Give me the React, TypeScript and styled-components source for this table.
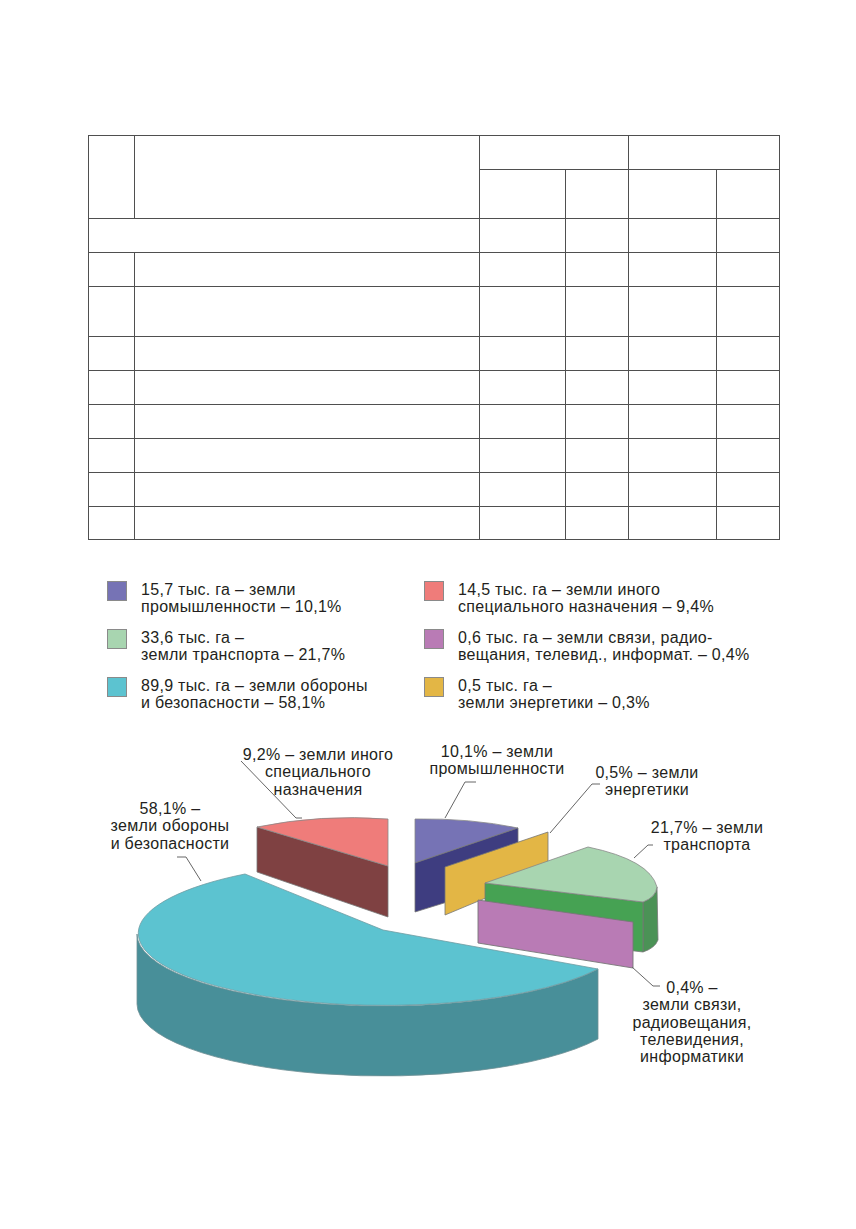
import styled, { createGlobalStyle } from "styled-components";

const GlobalStyle = createGlobalStyle`
  html, body {
    margin: 0;
    padding: 0;
    background: #ffffff;
  }
  body {
    font-family: "Liberation Sans", Arial, sans-serif;
    color: #231f20;
  }
`;

const rowHeights = [34, 34, 50, 34, 34, 34, 34, 34, 33];

const legendItems = [
  { color: "#7673b5", lines: ["15,7 тыс. га – земли", "промышленности – 10,1%"] },
  { color: "#ef7c7a", lines: ["14,5 тыс. га – земли иного", "специального назначения – 9,4%"] },
  { color: "#a8d5b0", lines: ["33,6 тыс. га –", "земли транспорта – 21,7%"] },
  {
    color: "#b97bb5",
    lines: ["0,6 тыс. га – земли связи, радио-", "вещания, телевид., информат. – 0,4%"],
  },
  { color: "#5cc3d0", lines: ["89,9 тыс. га – земли обороны", "и безопасности – 58,1%"] },
  { color: "#e3b645", lines: ["0,5 тыс. га –", "земли энергетики – 0,3%"] },
];

const labels = [
  { x: 318, y: 760, lines: ["9,2% – земли иного", "специального", "назначения"] },
  { x: 170, y: 814, lines: ["58,1% –", "земли обороны", "и безопасности"] },
  { x: 497, y: 757, lines: ["10,1% – земли", "промышленности"] },
  { x: 647, y: 778, lines: ["0,5% – земли", "энергетики"] },
  { x: 707, y: 833, lines: ["21,7% – земли", "транспорта"] },
  {
    x: 692,
    y: 993,
    lines: ["0,4% –", "земли связи,", "радиовещания,", "телевидения,", "информатики"],
  },
];

const leaders = [
  "M241,761 L296,818 L302,818",
  "M177,857 L186,857 L201,881",
  "M476,782 L465,782 L445,818",
  "M600,784 L592,784 L550,833",
  "M653,845 L648,845 L634,858",
  "M632,967 L653,986 L660,986",
];

export default function App() {
  return (
    <Page>
      <GlobalStyle />
      <DataTable>
        <colgroup>
          <col style={{ width: 46 }} />
          <col style={{ width: 345 }} />
          <col style={{ width: 86 }} />
          <col style={{ width: 63 }} />
          <col style={{ width: 88 }} />
          <col style={{ width: 63 }} />
        </colgroup>
        <tbody>
          <Row $h={34}>
            <Cell rowSpan={2} />
            <Cell rowSpan={2} />
            <Cell colSpan={2} />
            <Cell colSpan={2} />
          </Row>
          <Row $h={49}>
            <Cell />
            <Cell />
            <Cell />
            <Cell />
          </Row>
          {rowHeights.map((h, i) => (
            <Row key={i} $h={h}>
              {i === 0 ? (
                <Cell colSpan={2} />
              ) : (
                <>
                  <Cell />
                  <Cell />
                </>
              )}
              <Cell />
              <Cell />
              <Cell />
              <Cell />
            </Row>
          ))}
        </tbody>
      </DataTable>

      <Legend>
        {legendItems.map((item) => (
          <LegendItem key={item.lines[0]}>
            <Swatch $color={item.color} />
            <LegendText>
              {item.lines.map((l) => (
                <span key={l}>{l}</span>
              ))}
            </LegendText>
          </LegendItem>
        ))}
      </Legend>

      <Chart viewBox="0 711 856 400" width={856} height={400}>
        {/* cyan – обороны */}
        <path
          d="M137,934 L137,1004 A246,72 0 0,0 598,1039 L598,969 A246,72 0 0,1 137,934 Z"
          fill="#488f99"
          stroke="#6f8f94"
          strokeWidth={0.8}
        />
        <path
          d="M383,930 L245,874 A246,72 0 1,0 598,969 Z"
          fill="#5cc3d0"
          stroke="#6f9ca2"
          strokeWidth={0.8}
        />

        {/* pink – иного назначения */}
        <path d="M257,827 L388,866 L388,917 L257,872 Z" fill="#7f4142" stroke="#777" strokeWidth={0.8} />
        <path d="M257,827 Q320,814 388,819 L388,866 Z" fill="#ef7c7a" stroke="#888" strokeWidth={0.8} />

        {/* purple – промышленности */}
        <path d="M415,819 Q470,818 518,828 L415,863 Z" fill="#7673b5" stroke="#888" strokeWidth={0.8} />
        <path d="M415,863 L518,828 L518,880 L415,912 Z" fill="#3e3d80" stroke="#777" strokeWidth={0.8} />

        {/* yellow – энергетики */}
        <path d="M445,867 L548,832 L548,872 L445,915 Z" fill="#e3b645" stroke="#777" strokeWidth={0.8} />

        {/* green – транспорта */}
        <path
          d="M643,902 Q656,897 657,887 L658,940 Q655,948 643,952 Z"
          fill="#4b9256"
          stroke="#777"
          strokeWidth={0.8}
        />
        <path d="M485,883 L643,902 L643,952 L485,933 Z" fill="#46a253" stroke="#777" strokeWidth={0.8} />
        <path
          d="M485,883 L588,847 Q650,860 657,887 Q656,897 643,902 Z"
          fill="#a8d5b0"
          stroke="#888"
          strokeWidth={0.8}
        />

        {/* mauve – связи */}
        <path d="M478,900 L633,922 L633,968 L478,943 Z" fill="#b97bb5" stroke="#777" strokeWidth={0.9} />

        {leaders.map((d) => (
          <path key={d} d={d} fill="none" stroke="#666" strokeWidth={1} />
        ))}

        {labels.map((lab) => (
          <LabelText key={lab.lines[0]} x={lab.x} y={lab.y} textAnchor="middle">
            {lab.lines.map((l, i) => (
              <tspan key={l} x={lab.x} dy={i === 0 ? 0 : 17.3}>
                {l}
              </tspan>
            ))}
          </LabelText>
        ))}
      </Chart>
    </Page>
  );
}

const Page = styled.div`
  width: 856px;
  min-height: 1229px;
  padding-top: 135px;
  box-sizing: border-box;
  display: flex;
  flex-direction: column;
`;

const DataTable = styled.table`
  margin-left: 88px;
  width: 691px;
  table-layout: fixed;
  border-collapse: collapse;
`;

const Row = styled.tr<{ $h: number }>`
  height: ${(p) => p.$h}px;
`;

const Cell = styled.td`
  border: 1.4px solid #4f4f4f;
  padding: 0;
`;

const Legend = styled.div`
  margin: 41px 0 0 107px;
  display: grid;
  grid-template-columns: 317px 330px;
  grid-auto-rows: 34px;
  row-gap: 14px;
`;

const LegendItem = styled.div`
  display: flex;
  align-items: flex-start;
  gap: 14px;
`;

const Swatch = styled.div<{ $color: string }>`
  width: 18px;
  height: 18px;
  flex: none;
  background: ${(p) => p.$color};
  border: 1px solid #8a8a8a;
`;

const LegendText = styled.div`
  display: flex;
  flex-direction: column;
  font-size: 16px;
  line-height: 17px;
  letter-spacing: 0.3px;
  white-space: nowrap;
  color: #231f20;
`;

const Chart = styled.svg`
  display: block;
  flex: none;
`;

const LabelText = styled.text`
  font-family: "Liberation Sans", Arial, sans-serif;
  font-size: 16px;
  letter-spacing: 0.3px;
  fill: #231f20;
`;
